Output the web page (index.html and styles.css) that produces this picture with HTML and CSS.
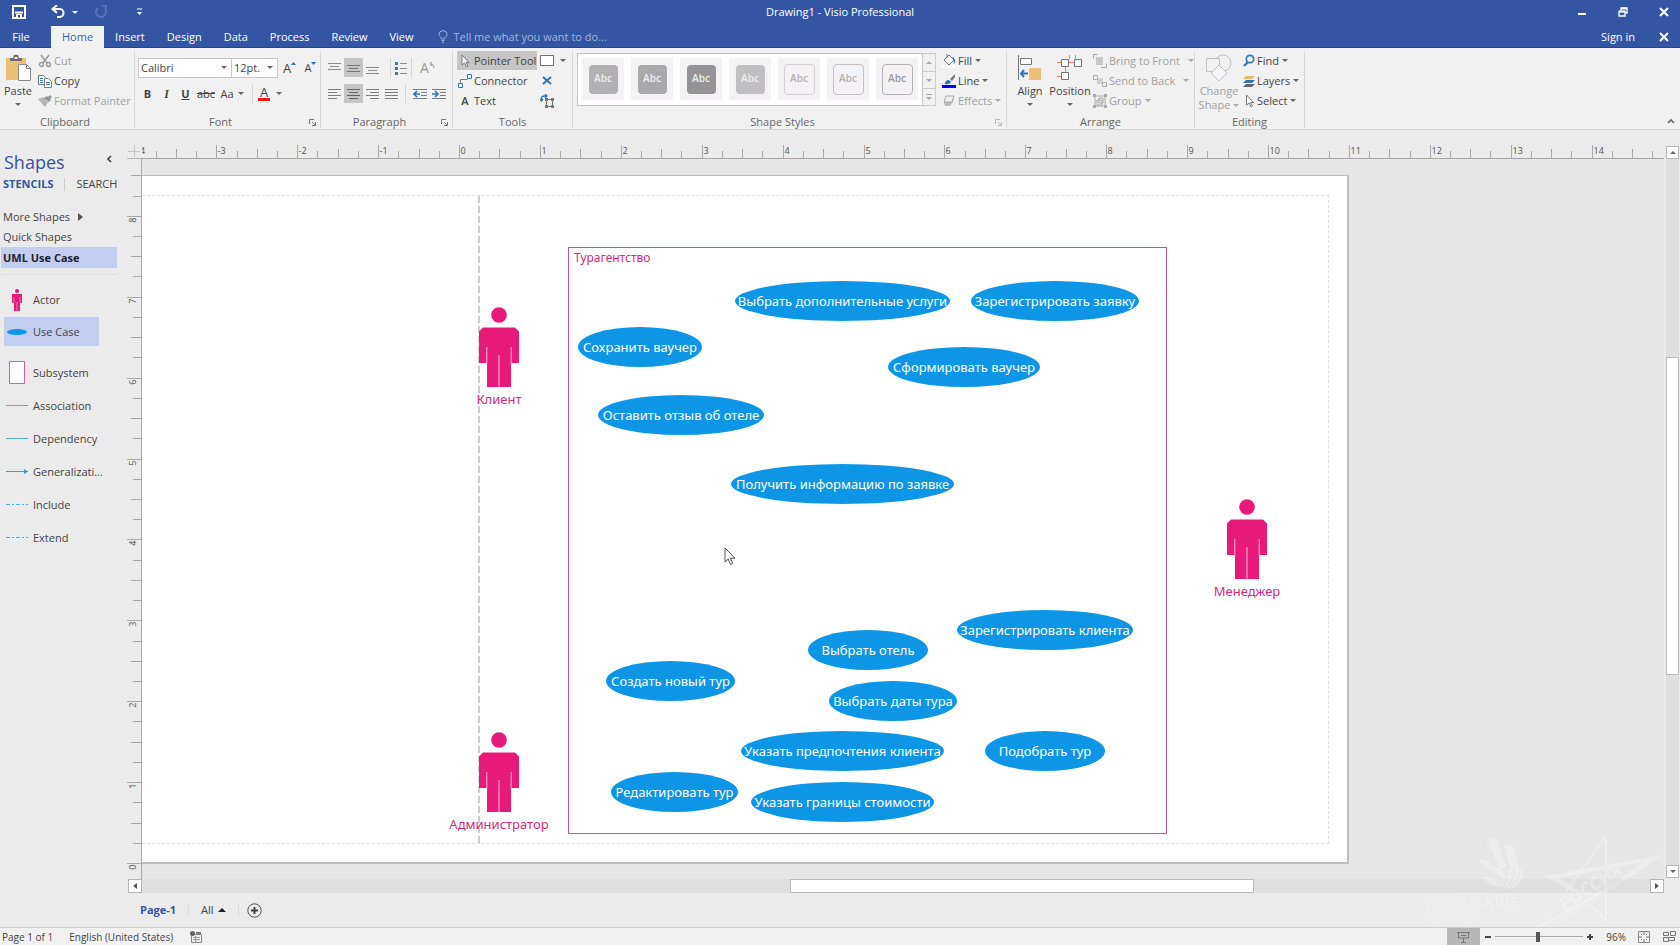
FILE: index.html
```html
<!DOCTYPE html>
<html lang="en">
<head>
<meta charset="utf-8">
<title>Drawing1 - Visio Professional</title>
<link rel="stylesheet" href="styles.css">
</head>
<body>
<div class="app">
  <header class="titlebar">
    <div class="quick">
      <button class="qbtn" aria-label="Save"><svg width="14" height="14" viewBox="0 0 14 14"><path d="M1 1h12v12H1z M1 1" fill="none" stroke="#fff" stroke-width="2"/><path d="M3 7.500h8" stroke="#fff" stroke-width="2"/><path d="M4 13v-4h6v4" fill="#fff"/><path d="M6 10h2v2.500H6z" fill="#3455a4"/></svg></button>
      <button class="qbtn undo" aria-label="Undo"><svg width="14" height="14" viewBox="0 0 14 14"><path d="M2 4h6.500a3.800 3.800 0 0 1 0 8H6" fill="none" stroke="#fff" stroke-width="2"/><path d="M6 0L1.500 4L6 8" fill="none" stroke="#fff" stroke-width="2"/></svg><i class="caret light"></i></button>
      <button class="qbtn redo" aria-label="Repeat"><svg width="14" height="14" viewBox="0 0 14 14"><path d="M4 3A5 5 0 1 0 11 4" fill="none" stroke="#5874ba" stroke-width="2"/><path d="M8 1h4v4" fill="none" stroke="#5874ba" stroke-width="1.500"/></svg></button>
      <button class="qbtn" aria-label="Customize Quick Access Toolbar"><svg width="7" height="8" viewBox="0 0 7 8"><path d="M1 1h5" stroke="#fff"/><path d="M1 4h5L3.500 7z" fill="#fff"/></svg></button>
    </div>
    <div class="doc-title">Drawing1 - Visio Professional</div>
    <div class="window-buttons">
      <button aria-label="Minimize"><svg width="10" height="10" viewBox="0 0 10 10"><path d="M1 7h8" stroke="#fff" stroke-width="2"/></svg></button>
      <button aria-label="Restore"><svg width="10" height="10" viewBox="0 0 10 10"><path d="M3 3V1h6v5H7.500M1 4.500h6V9H1z" fill="none" stroke="#fff" stroke-width="1.300"/><path d="M3 1.500h6M1 4.500h6" stroke="#fff" stroke-width="2"/></svg></button>
      <button aria-label="Close"><svg width="10" height="10" viewBox="0 0 10 10"><path d="M1 1l8 8M9 1L1 9" stroke="#fff" stroke-width="2"/></svg></button>
    </div>
  </header>

  <nav class="tabs">
    <button class="tab file">File</button>
    <button class="tab active">Home</button>
    <button class="tab">Insert</button>
    <button class="tab">Design</button>
    <button class="tab">Data</button>
    <button class="tab">Process</button>
    <button class="tab">Review</button>
    <button class="tab">View</button>
    <label class="tell"><svg width="10" height="13" viewBox="0 0 10 13"><path d="M3.500 9C3.500 7 1 6.500 1 4.300a4 3.700 0 0 1 8 0C9 6.500 6.500 7 6.500 9zM3.500 10.500h3M4 12.300h2" fill="none" stroke="#a3b4dc"/></svg><input type="text" aria-label="Tell me what you want to do" placeholder="Tell me what you want to do..."></label>
    <a class="signin" href="#">Sign in</a>
    <button class="close-doc" aria-label="Close drawing"><svg width="10" height="10" viewBox="0 0 10 10"><path d="M1 1l8 8M9 1L1 9" stroke="#fff" stroke-width="2"/></svg></button>
  </nav>

  <section class="ribbon" aria-label="Home">
    <div class="group clipboard">
      <div class="content">
        <button class="big paste"><svg width="28" height="28" viewBox="0 0 28 28"><path d="M2 4h20v22H2z" fill="#ecc077"/><path d="M6 7V4h3l1-3h4l1 3h3v3z" fill="#6b6b6b"/><path d="M10.500 3h3v2h-3z" fill="#f1f1f1"/><path d="M14.500 10.500h8l4 4v12h-12z" fill="#fff" stroke="#858585"/><path d="M22.500 10.500v4h4" fill="none" stroke="#858585"/></svg><span>Paste</span><i class="caret"></i></button>
        <div class="rows">
          <button class="cmd off"><svg width="14" height="14" viewBox="0 0 14 14"><path d="M3 1l6 8M11 1L5 9" stroke="#999" stroke-width="1.500"/><circle cx="3.500" cy="10.500" r="2" fill="none" stroke="#999" stroke-width="1.300"/><circle cx="10.500" cy="10.500" r="2" fill="none" stroke="#999" stroke-width="1.300"/></svg>Cut</button>
          <button class="cmd"><svg width="14" height="14" viewBox="0 0 14 14"><path d="M.5 1.500h5l2 2v7h-7z" fill="#fff" stroke="#7d7d7d"/><path d="M6.500 4.500h4l3 3v6h-7z" fill="#fff" stroke="#7d7d7d"/><path d="M2 4.500h3M2 6.500h3M2 8.500h3M8 8.500h4M8 10.500h4" stroke="#3c7ab5"/></svg>Copy</button>
          <button class="cmd off"><svg width="14" height="14" viewBox="0 0 14 14"><path d="M0 5l6-2 4 5-3 5z" fill="#b5b5b5"/><path d="M6 4l5 4 2-2-4-4zM10 3l2-2 2 2-2 2z" fill="#929292"/></svg>Format Painter</button>
        </div>
      </div>
      <div class="label">Clipboard</div>
    </div>

    <div class="group font">
      <div class="content stack">
        <div class="line">
          <span class="pick family"><select aria-label="Font"><option>Calibri</option></select><i class="caret"></i></span><span class="pick size"><select aria-label="Font size"><option>12pt.</option></select><i class="caret"></i></span>
          <button class="tool grow" aria-label="Increase font size"><span>A</span><svg width="5" height="14" viewBox="0 0 5 14"><path d="M0 4L2.500 1L5 4z" fill="#2f75b5"/></svg></button>
          <button class="tool grow small" aria-label="Decrease font size"><span>A</span><svg width="5" height="14" viewBox="0 0 5 14"><path d="M0 1h5L2.500 4z" fill="#2f75b5"/></svg></button>
        </div>
        <div class="line">
          <button class="tool b">B</button><button class="tool it">I</button><button class="tool u">U</button><button class="tool s">abc</button><button class="tool case">Aa<i class="caret"></i></button><i class="sep"></i><button class="tool color" aria-label="Font color"><span>A</span><i class="caret"></i></button>
        </div>
      </div>
      <div class="label has-launch">Font<svg class="launch" width="7" height="7" viewBox="0 0 7 7"><path d="M.5 5V.5H5M3 3l3 3M6.500 3v3.500H3" fill="none" stroke="#777"/></svg></div>
    </div>

    <div class="group paragraph">
      <div class="content stack">
        <div class="line">
          <button class="tool" aria-label="Top"><svg width="13" height="14"><path d="M0 2.500h13M2 5.500h9M0 8.500h13" stroke="#8a8a8a"/></svg></button><button class="tool on" aria-label="Middle"><svg width="13" height="14"><path d="M0 4.500h13M2 7.500h9M0 10.500h13" stroke="#777"/></svg></button><button class="tool" aria-label="Bottom"><svg width="13" height="14"><path d="M0 6.500h13M2 9.500h9M0 12.500h13" stroke="#8a8a8a"/></svg></button><i class="sep wide"></i><button class="tool bullets" aria-label="Bullets"><svg width="12" height="14"><path d="M5 2.500h7M5 7.500h7M5 12.500h7" stroke="#8a8a8a"/><path d="M0 1h3v3H0zM0 6h3v3H0zM0 11h3v3H0z" fill="#3c7ab5"/></svg></button><i class="sep"></i><button class="tool rotate" aria-label="Rotate text"><span>A</span><svg width="6" height="12" viewBox="0 0 6 12"><path d="M3 0L1 2l2 2M1 2h1q3 0 3 4" fill="none" stroke="#999"/></svg></button>
        </div>
        <div class="line">
          <button class="tool" aria-label="Align left"><svg width="13" height="12"><path d="M0 1.500h13M0 4.500h9M0 7.500h13M0 10.500h9" stroke="#7c7c7c"/></svg></button><button class="tool on" aria-label="Center"><svg width="13" height="12"><path d="M0 1.500h13M2 4.500h9M0 7.500h13M2 10.500h9" stroke="#666"/></svg></button><button class="tool" aria-label="Align right"><svg width="13" height="12"><path d="M0 1.500h13M4 4.500h9M0 7.500h13M4 10.500h9" stroke="#7c7c7c"/></svg></button><button class="tool" aria-label="Justify"><svg width="13" height="12"><path d="M0 1.500h13M0 4.500h13M0 7.500h13M0 10.500h13" stroke="#7c7c7c"/></svg></button><i class="sep"></i><button class="tool" aria-label="Decrease indent"><svg width="14" height="12"><path d="M0 1.500h14M8 4.500h6M8 7.500h6M0 10.500h14" stroke="#7c7c7c"/><path d="M1 6h6M4 3L1 6l3 3" fill="none" stroke="#2f75b5" stroke-width="1.600"/></svg></button><button class="tool" aria-label="Increase indent"><svg width="14" height="12"><path d="M0 1.500h14M8 4.500h6M8 7.500h6M0 10.500h14" stroke="#7c7c7c"/><path d="M0 6h6M3 3l3 3-3 3" fill="none" stroke="#2f75b5" stroke-width="1.600"/></svg></button>
        </div>
      </div>
      <div class="label has-launch">Paragraph<svg class="launch" width="7" height="7" viewBox="0 0 7 7"><path d="M.5 5V.5H5M3 3l3 3M6.500 3v3.500H3" fill="none" stroke="#777"/></svg></div>
    </div>

    <div class="group tools">
      <div class="content">
        <div class="rows first">
          <button class="cmd on"><svg width="14" height="14" viewBox="0 0 14 14"><path d="M4 1v10l2.500-2 2 4 1.500-1-2-3.500H11z" fill="#fff" stroke="#777"/></svg>Pointer Tool</button>
          <button class="cmd"><svg width="14" height="14" viewBox="0 0 14 14"><path d="M2.500 9V5.500h7" fill="none" stroke="#777"/><path d="M.5 9.500h4v4h-4zM9.500.5h4v4h-4z" fill="#fff" stroke="#2f75b5"/></svg>Connector</button>
          <button class="cmd"><b class="letter">A</b>Text</button>
        </div>
        <div class="rows">
          <button class="cmd" aria-label="Rectangle"><svg width="14" height="14"><path d="M.5 1.500h13v10H.5z" fill="#fff" stroke="#6f6f6f"/></svg><i class="caret"></i></button>
          <button class="cmd" aria-label="Connection point"><svg width="14" height="14"><path d="M3 3l8 7M11 3L3 10" stroke="#2f75b5" stroke-width="2"/></svg></button>
          <button class="cmd" aria-label="Text block"><svg width="14" height="14"><path d="M6.500 5.500h6v7h-6z" fill="none" stroke="#777"/><path d="M5 4h3v3H5zM11 4h3v3h-3zM5 11h3v3H5zM11 11h3v3h-3z" fill="#777"/><path d="M1.500 7V4q0-2 3-2h2M0 5l1.500 2L3 5M5 0l2 2-2 2" fill="none" stroke="#2f75b5" stroke-width="1.300"/></svg></button>
        </div>
      </div>
      <div class="label">Tools</div>
    </div>

    <div class="group styles">
      <div class="content">
        <div class="gallery">
          <button class="tile"><span class="sw s1">Abc</span></button>
          <button class="tile"><span class="sw s2">Abc</span></button>
          <button class="tile"><span class="sw s3">Abc</span></button>
          <button class="tile"><span class="sw s4">Abc</span></button>
          <button class="tile"><span class="sw o1">Abc</span></button>
          <button class="tile"><span class="sw o2">Abc</span></button>
          <button class="tile"><span class="sw o3">Abc</span></button>
        </div>
        <div class="spin"><button aria-label="Previous row"><i class="caret up off"></i></button><button aria-label="Next row"><i class="caret off"></i></button><button class="more" aria-label="More styles"><i class="caret off"></i></button></div>
        <div class="rows">
          <button class="cmd"><svg width="14" height="14" viewBox="0 0 14 14"><path d="M0 11h14v3H0z" fill="#fff"/><path d="M2 6l5-5 5 5-5 5z" fill="#fff" stroke="#777"/><path d="M5 4V0" stroke="#777"/><path d="M10 3q4 1 3 7q-2-2-1-4z" fill="#2f75b5"/></svg>Fill<i class="caret"></i></button>
          <button class="cmd"><svg width="14" height="14" viewBox="0 0 14 14"><path d="M0 11h14v3H0z" fill="#0000f0"/><path d="M3 10q0-4 4-4l2 2q-2 3-6 2z" fill="#2f75b5"/><path d="M8 5l5-5v3L10 7z" fill="#777"/></svg>Line<i class="caret"></i></button>
          <button class="cmd off"><svg width="14" height="14" viewBox="0 0 14 14"><path d="M2 9l2-7h8l-1 6-3 4H3z" fill="#b9b9b9"/><path d="M4 2h8l-2 6H2z" fill="#f1f1f1" stroke="#aaa"/></svg>Effects<i class="caret off"></i></button>
        </div>
      </div>
      <div class="label has-launch">Shape Styles<svg class="launch" width="7" height="7" viewBox="0 0 7 7"><path d="M.5 5V.5H5M3 3l3 3M6.500 3v3.500H3" fill="none" stroke="#bbb"/></svg></div>
    </div>

    <div class="group arrange">
      <div class="content">
        <button class="big align"><svg width="26" height="28" viewBox="0 0 26 28"><path d="M1.500 1v25" stroke="#777"/><path d="M3.500 4.500h11v6h-11z" fill="#fff" stroke="#777"/><path d="M12 14h12v12H12z" fill="#ecc077"/><path d="M4 19.500h7M7 16l-3 3.500L7 23" fill="none" stroke="#2f75b5" stroke-width="2"/></svg><span>Align</span><i class="caret"></i></button>
        <button class="big position"><svg width="28" height="28" viewBox="0 0 28 28"><path d="M1 8.500h25M9.500 12v7M1 22.500h5M13.500 1v4M19.500 1v4" stroke="#e08a63"/><path d="M5.500 5.500h7v7h-7zM18.500 5.500h7v7h-7zM5.500 18.500h7v7h-7z" fill="#fff" stroke="#777"/></svg><span>Position</span><i class="caret"></i></button>
        <div class="rows">
          <button class="cmd off"><svg width="14" height="14"><path d="M3 3h7v8H3z" fill="#c8c8c8"/><path d="M.5 4.500v-4h4M8 13.500h5.500v-4" fill="none" stroke="#aaa"/></svg><span class="wide">Bring to Front</span><i class="caret off"></i></button>
          <button class="cmd off"><svg width="14" height="14"><path d="M4 4h6v6H4z" fill="#d0d0d0"/><path d="M.5 1.500h4v4h-4zM9.500 8.500h4v4h-4z" fill="#f1f1f1" stroke="#aaa"/></svg><span class="wide">Send to Back</span><i class="caret off"></i></button>
          <button class="cmd off"><svg width="14" height="14"><path d="M2 2h10v10H2zM4 6h5v5H4zM6 4h4v5H6z" fill="none" stroke="#aaa"/><path d="M0 0h3v3H0zM11 0h3v3h-3zM0 11h3v3H0zM11 11h3v3h-3z" fill="#aaa"/></svg>Group<i class="caret off"></i></button>
        </div>
      </div>
      <div class="label">Arrange</div>
    </div>

    <div class="group editing">
      <div class="content">
        <button class="big off change"><svg width="28" height="28" viewBox="0 0 28 28"><circle cx="18" cy="9" r="8" fill="none" stroke="#c2c2c2"/><path d="M1.500 4.500h13v13h-13z" fill="#f4f1f4" stroke="#c2c2c2"/><path d="M14 11l8 8-8 8-8-8z" fill="#f7f4f7" stroke="#c2c2c2"/></svg><span>Change<br>Shape<i class="caret off inline"></i></span></button>
        <div class="rows">
          <button class="cmd"><svg width="12" height="14"><circle cx="7" cy="5" r="3.700" fill="none" stroke="#2f75b5" stroke-width="1.700"/><path d="M5 8l-4 4" stroke="#2f75b5" stroke-width="2.300"/></svg>Find<i class="caret"></i></button>
          <button class="cmd"><svg width="12" height="14"><path d="M3 2h9l-3 3H0z" fill="#ecb667"/><path d="M3 6h9l-3 3H0z" fill="#2f75b5"/><path d="M3 10h9l-3 3H0z" fill="#666"/></svg>Layers<i class="caret"></i></button>
          <button class="cmd"><svg width="12" height="14"><path d="M3.500 1v10l2.500-2 2 4 1.500-1-2-3.500h3z" fill="#fff" stroke="#777"/></svg>Select<i class="caret"></i></button>
        </div>
      </div>
      <div class="label">Editing</div>
    </div>
    <button class="collapse" aria-label="Collapse the ribbon"><svg width="8" height="6"><path d="M1 5l3-3 3 3" fill="none" stroke="#666" stroke-width="1.700"/></svg></button>
  </section>

  <main class="work">
    <aside class="shapes">
      <div class="head"><h2>Shapes</h2><button aria-label="Collapse shapes"><svg width="6" height="8"><path d="M5 1L2 4l3 3" fill="none" stroke="#444" stroke-width="1.700"/></svg></button></div>
      <div class="modes"><button class="on">STENCILS</button><i></i><button>SEARCH</button></div>
      <button class="stencil">More Shapes<svg width="5" height="8"><path d="M0 0l5 4-5 4z" fill="#555"/></svg></button>
      <button class="stencil">Quick Shapes</button>
      <button class="stencil on">UML Use Case</button>
      <hr>
      <ul class="masters">
        <li><svg width="24" height="22" viewBox="0 0 24 22"><circle cx="12" cy="2" r="2" fill="#e81a79"/><path d="M7 5h10v9h-2v8h-3v-7v7H9v-8H7z" fill="#e81a79"/><path d="M9 8v6M15 8v6M12 13v9" stroke="#f9b5d4" stroke-width=".6"/></svg><span>Actor</span></li>
        <li class="on"><svg width="24" height="10"><ellipse cx="12" cy="5" rx="10" ry="3" fill="#0d96e6"/></svg><span>Use Case</span></li>
        <li><svg width="24" height="24"><path d="M4.500.5h15v22h-15z" fill="#fff" stroke="#df5c9b"/></svg><span>Subsystem</span></li>
        <li><svg width="24" height="6"><path d="M1 2.500h22" stroke="#5aade0"/></svg><span>Association</span></li>
        <li><svg width="24" height="6"><path d="M1 2.500h22" stroke="#5aade0"/></svg><span>Dependency</span></li>
        <li><svg width="24" height="6"><path d="M1 2.500h22" stroke="#3c9bd8"/><path d="M19 0l4 2.500L19 5z" fill="#3c9bd8"/></svg><span>Generalizati...</span></li>
        <li><svg width="24" height="6"><path d="M5 2.500h15" stroke="#dff1fb" stroke-width="3"/><path d="M1 2.500h22" stroke="#5aade0" stroke-dasharray="4 2 2 2"/></svg><span>Include</span></li>
        <li><svg width="24" height="6"><path d="M5 2.500h15" stroke="#dff1fb" stroke-width="3"/><path d="M1 2.500h22" stroke="#5aade0" stroke-dasharray="4 2 2 2"/></svg><span>Extend</span></li>
      </ul>
    </aside>

    <div class="corner"><svg width="15" height="14"><path d="M1 7.500h12M7.500 1v12" stroke="#c4c4c4"/></svg></div>
    <svg class="ruler-x" id="rulerX" aria-hidden="true"></svg>
    <svg class="ruler-y" id="rulerY" aria-hidden="true"></svg>

    <div class="canvas">
      <div class="page" id="page">
        <div class="margins"></div>
        <div class="guide"></div>
        <div class="subsystem">Турагентство</div>
      </div>
      <svg class="pointer" width="13" height="19" viewBox="0 0 13 19"><path d="M1 1v14l3.200-3 2.300 5.500 2.200-1-2.300-5.300H11z" fill="#fff" stroke="#555"/></svg>
    </div>

    <div class="vscroll"><button aria-label="Scroll up"><i class="caret up"></i></button><div class="track"><div class="thumb"></div></div><button aria-label="Scroll down"><i class="caret"></i></button></div>
    <div class="hscroll"><button aria-label="Scroll left"><i class="caret left"></i></button><div class="track"><div class="thumb"></div></div><button aria-label="Scroll right"><i class="caret right"></i></button></div>
    <div class="pages"><button class="on">Page-1</button><i></i><button>All<b class="caret up dark"></b></button><i></i><button class="add" aria-label="Insert page"><svg width="15" height="15"><circle cx="7.500" cy="7.500" r="6.700" fill="none" stroke="#555"/><path d="M7.500 4v7M4 7.500h7" stroke="#444" stroke-width="2"/></svg></button></div>
  </main>

  <footer class="status">
    <span>Page 1 of 1</span>
    <span class="lang">English (United States)</span>
    <button aria-label="Macros"><svg width="12" height="12"><path d="M1.500 3.500h10v8h-10z" fill="none" stroke="#888"/><path d="M6 1h5v2H6z" fill="#777"/><circle cx="2.500" cy="2.500" r="2.500" fill="#666"/><path d="M3 6.500h7M3 8.500h7M5.500 5v6" stroke="#999"/></svg></button>
    <span class="space"></span>
    <button class="present" aria-label="Presentation mode"><svg width="13" height="12"><path d="M0 1.500h13M1.500 2v5h10V2M6.500 7v4M4 11.500h5M4 4.500h5" fill="none" stroke="#777"/></svg></button>
    <button class="zoom-step" aria-label="Zoom out"><svg width="6" height="8"><path d="M0 4h6" stroke="#444" stroke-width="2"/></svg></button>
    <input type="range" min="0" max="100" value="48" aria-label="Zoom">
    <button class="zoom-step" aria-label="Zoom in"><svg width="8" height="8"><path d="M1 4h6M4 1v6" stroke="#444" stroke-width="2"/></svg></button>
    <button class="percent">96%</button>
    <button aria-label="Fit page"><svg width="12" height="12"><path d="M.5.5h11v11H.5z" fill="none" stroke="#888"/><path d="M6 1v3M6 8v3M1 6h3M8 6h3M3 3l1 1M9 3L8 4M3 9l1-1M9 9L8 8" stroke="#777"/></svg></button>
    <button class="switch" aria-label="Switch windows"><svg width="13" height="12"><path d="M.5 1.500h5v3h-5zM7.500.5h5v4h-5zM.5 6.500h5v4h-5zM5.500 6.500h6v3h-6z" fill="none" stroke="#777"/></svg></button>
  </footer>

  <div class="watermark" aria-hidden="true">
    <div class="ws">
      <svg width="46" height="52" viewBox="0 0 46 52"><path d="M9 5q4-7 10-3l9 26-6 5-7-19zM26 9q7-5 11 3l5 20-8 2zM1 24q2-4 7-1l19 11-3 6zM5 40q5-3 20 3l-1 6q-12 0-19-9zM25 38q10-14 20-5 0 14-13 18l-8-3z" fill="#fff"/><path d="M28 50q8-8 8-20M25 49q4-8 5-18M32 51q8-7 10-19" stroke="#e0e0e0" fill="none"/></svg>
      <div>world<b>skills</b></div><div>Russia</div>
    </div>
    <svg class="star" width="130" height="94" viewBox="0 0 130 94"><path d="M68 2L28 58M68 2v84L46 66M2 92l62-34" fill="none" stroke="#fff" stroke-width="2"/><path d="M7 42L124 21L86 47l-3-4 22-15L22 44l16 11-3 3z" fill="#fff"/><text x="26" y="77" transform="rotate(-33 26 77)" class="ru">РОССИЯ</text><text x="20" y="90" transform="rotate(-33 20 90)" class="ru2">МОЛОДЫЕ ПРОФЕССИОНАЛЫ</text></svg>
  </div>
</div>
<script src="app.js"></script>
</body>
</html>
```
FILE: styles.css
```css
* { box-sizing: border-box; }
body { margin: 0; font: 11px/16px "Open Sans", "Noto Sans", sans-serif; color: #444; background: #ebebeb; }
button, select, input { font: inherit; color: inherit; border: 0; padding: 0; margin: 0; background: none; border-radius: 0; }
button { display: flex; align-items: center; justify-content: center; white-space: nowrap; }
svg { flex: none; display: block; }
.app { position: relative; min-height: 100vh; display: grid; grid-template-rows: 26px 22px 82px 1fr 18px; overflow: hidden; }

.caret { width: 0; height: 0; flex: none; border: 3px solid transparent; border-top-color: #666; border-bottom: 0; }
.caret.light { border-top-color: #fff; }
.caret.up { border: 3px solid transparent; border-bottom-color: #666; border-top: 0; }
.caret.left { border: 3px solid transparent; border-right: 4px solid #555; border-left: 0; }
.caret.right { border: 3px solid transparent; border-left: 4px solid #555; border-right: 0; }
.caret.off { border-top-color: #aaa; }
.caret.up.off { border-top-color: transparent; border-bottom-color: #aaa; }
.caret.dark { border-width: 4px; border-top: 0; border-bottom-color: #222; }

.titlebar { display: grid; grid-template-columns: 1fr auto 1fr; align-items: center; background: #3455a4; color: #fff; padding-bottom: 2px; }
.quick { display: flex; align-items: center; padding-left: 12px; }
.undo { margin-left: 25px; gap: 7px; }
.redo { margin-left: 16px; }
.redo + .qbtn { margin-left: 28px; }
.window-buttons { display: flex; justify-content: flex-end; gap: 31px; padding-right: 11px; }

.tabs { display: flex; background: #3455a4; color: #fff; border-bottom: 1px solid #1d479c; }
.tab { padding: 0 11px; }
.tab.file { width: 51px; padding: 0 9px 0 0; }
.tab.active { background: #f1f1f1; color: #3f5fae; margin-bottom: -1px; }
.tell { display: flex; align-items: center; gap: 5px; margin-left: 14px; flex: 1; color: #a3b4dc; }
.tell input { flex: 1; max-width: 240px; outline: 0; }
.tell input::placeholder { color: #a3b4dc; opacity: 1; }
.signin { color: #fff; text-decoration: none; align-self: center; }
.close-doc { margin: 0 11px 0 24px; }

.ribbon { position: relative; display: flex; background: #f1f1f1; border-bottom: 1px solid #d2d2d2; padding: 3px 0 1px; }
.group { display: flex; flex-direction: column; border-right: 1px solid #d8d8d8; flex: none; }
.content { display: flex; flex: 1; }
.content.stack { flex-direction: column; padding-top: 7px; gap: 7px; }
.label { position: relative; height: 13px; line-height: 13px; text-align: center; color: #666; }
.label.has-launch { padding-right: 14px; }
.launch { position: absolute; right: 4px; bottom: 2px; }
.line { display: flex; align-items: center; height: 19px; }
.rows { display: grid; grid-template-rows: repeat(3, 20px); justify-items: start; align-content: start; }
.cmd { height: 19px; gap: 2px; }
.cmd.off, .big.off { color: #a2a2a2; }
.cmd.on, .tool.on { background: #c5c5c5; }
.cmd .caret { margin-left: 1px; }
.big { flex-direction: column; justify-content: flex-start; line-height: 14px; padding-top: 3px; }
.big > span { margin-top: 2px; }
.big > .caret { margin-top: 5px; }
.caret.inline { display: inline-block; margin: 0 0 2px 3px; }
.tool { width: 19px; height: 19px; }
.sep { width: 1px; height: 19px; background: #d5d5d5; }

.clipboard { width: 135px; }
.clipboard .label { padding-right: 4px; }
.paste { width: 36px; }
.clipboard .rows { margin-left: 2px; }
.font { width: 186px; }
.font .line { padding-left: 3px; }
.pick { position: relative; height: 20px; background: #fff; border: 1px solid #c6c6c6; display: flex; align-items: center; }
.pick select { appearance: none; width: 100%; height: 18px; padding-left: 2px; outline: 0; }
.pick .caret { position: absolute; right: 4px; }
.family { width: 94px; }
.size { width: 46px; border-left: 0; }
.grow { align-items: center; font-size: 13px; margin-left: 2px; }
.grow.small { font-size: 11px; }
.b { font-weight: 700; }
.it { font-style: italic; font-family: "Liberation Serif", serif; font-weight: 700; font-size: 12px; }
.u { text-decoration: underline; font-weight: 700; }
.s { text-decoration: line-through; width: 22px; }
.case { width: 30px; gap: 4px; }
.case + .sep { margin: 0 5px; }
.color { width: 24px; gap: 6px; }
.color span { width: 14px; height: 15px; line-height: 12px; font-size: 13px; border-bottom: 3px solid #f11; }
.paragraph { width: 132px; }
.paragraph .line { padding-left: 4px; }
.paragraph .sep { margin: 0 4px; }
.paragraph .sep.wide { margin: 0 0 0 8px; }
.paragraph .bullets + .sep { margin: 0 6px 0 1px; }
.rotate { color: #999; font-size: 14px; }
.tools { width: 120px; }
.tools .first { margin: 0 3px 0 4px; width: 80px; }
.tools .cmd.on { width: 80px; }
.tools .first .cmd { justify-content: flex-start; padding-left: 1px; }
.tools .cmd .caret { margin-left: 4px; }
.letter { width: 14px; text-align: center; font-weight: 600; }
.styles { width: 434px; }
.gallery { display: flex; gap: 7px; height: 53px; margin: 2px 0 0 4px; padding: 4px; background: #fff; border: 1px solid #c3c3c3; }
.tile { width: 42px; height: 42px; background: #f5f2f5; }
.sw { width: 29px; height: 29px; line-height: 27px; border-radius: 4px; color: #eee; font-size: 10px; font-weight: 600; }
.s1 { background: #b1b0b3; } .s2 { background: #a9a8ab; } .s3 { background: #949395; } .s4 { background: #c0bfc2; }
.o1, .o2, .o3 { color: #b3b1b4; border: 1px solid #d3d0d3; width: 31px; height: 31px; }
.o2 { border-color: #c5c3c6; } .o3 { border-color: #b5b3b6; color: #999; }
.spin { display: grid; grid-template-rows: 1fr 1fr 1fr; width: 13px; height: 53px; margin: 2px 6px 0 0; border: 1px solid #cdcdcd; border-left: 0; }
.spin button + button { border-top: 1px solid #cdcdcd; }
.spin .more { flex-direction: column; gap: 2px; }
.spin .more::before { content: ""; width: 6px; height: 1px; background: #aaa; }
.arrange { width: 188px; }
.align { width: 42px; margin-left: 2px; }
.position { width: 38px; }
.arrange .rows { margin-left: 4px; }
.arrange .wide { padding-right: 5px; }
.editing { width: 110px; }
.change { width: 48px; }
.collapse { margin: auto 5px 4px auto; }

.work { display: grid; grid-template: 29px 1fr 14px 34px / 127px 15px minmax(0, 1fr) 16px; min-height: 0; }
.shapes { grid-row: 1 / -1; }
.head { display: flex; justify-content: space-between; align-items: flex-start; padding: 20px 15px 0 4px; height: 44px; }
.head h2 { margin: 0; font-size: 18px; line-height: 24px; font-weight: 400; color: #3455a4; }
.head button { height: 18px; }
.modes { display: flex; align-items: center; height: 20px; padding-left: 3px; }
.modes .on { color: #3455a4; font-weight: 700; }
.modes i { width: 1px; height: 13px; background: #ccc; margin: 0 11px; }
.stencil { width: 116px; height: 20px; margin-left: 1px; padding-left: 2px; justify-content: flex-start; gap: 8px; }
.modes + .stencil { margin-top: 13px; }
.stencil.on { height: 21px; background: #c2cef0; font-weight: 700; color: #223; }
.shapes hr { border: 0; border-top: 1px solid #dedede; margin: 6px 10px 8px 1px; }
.masters { list-style: none; margin: 0; padding: 0; }
.masters li { display: flex; align-items: center; gap: 4px; height: 33px; margin-left: 5px; }
.masters .on { background: #c2cef0; height: 29px; width: 95px; margin: 1px 0 10px 4px; padding-left: 1px; }
.corner { padding-top: 14px; border-bottom: 1px solid #b8b8b8; }
.ruler-x, .ruler-y { width: 100%; height: 100%; font-size: 9px; }
.ruler-x text, .ruler-y text { fill: #555; }
.ruler-x line, .ruler-y line { stroke: #a8a8a8; }

.canvas { position: relative; overflow: hidden; background: #e6e6e6; }
.page { position: relative; width: 1207px; height: 689px; margin-top: 16px; background: #fff; border: solid #bdbdbd; border-width: 1px 2px 2px 0; font-family: "Noto Sans", "Open Sans", sans-serif; }
.margins { position: absolute; left: 0; right: 18px; top: 19px; bottom: 18px; border: 1px dashed #e0e0e0; border-left: 0; }
.guide { position: absolute; left: 336px; top: 20px; bottom: 19px; width: 2px; background: repeating-linear-gradient(#ccc 0 7px, transparent 7px 10px); }
.subsystem { position: absolute; left: 426px; top: 71px; width: 599px; height: 587px; border: 1px solid #c9508c; padding: 2px 5px; color: #d12b7b; font-size: 12px; }
.usecase { position: absolute; height: 40px; padding-bottom: 1px; border-radius: 50%; background: #0d96e6; color: #fff; font-size: 13px; display: flex; align-items: center; justify-content: center; white-space: nowrap; }
.actor { position: absolute; width: 120px; display: flex; flex-direction: column; align-items: center; color: #d12b7b; font-size: 13px; line-height: 18px; gap: 3px; }
.pointer { position: absolute; left: 582px; top: 388px; }

.vscroll { grid-column: 4; grid-row: 1 / 3; display: flex; flex-direction: column; padding: 16px 1px 1px 2px; }
.vscroll button { height: 13px; background: #fff; border: 1px solid #b5b5b5; }
.vscroll .track { flex: 1; background: #dfdfdf; display: grid; grid-template-rows: 198fr 318fr 190fr; }
.thumb { background: #fff; border: 1px solid #bababa; grid-row: 2; }
.hscroll { grid-column: 2 / 4; grid-row: 3; display: flex; padding-left: 1px; }
.hscroll button { width: 14px; background: #fff; border: 1px solid #b5b5b5; }
.hscroll .track { flex: 1; background: #dfdfdf; display: grid; grid-template-columns: 648fr 464fr 396fr; }
.hscroll .thumb { grid-column: 2; grid-row: 1; }
.pages { grid-column: 2 / -1; grid-row: 4; display: flex; align-items: center; padding-left: 13px; }
.pages i { width: 1px; height: 14px; background: #dcdcdc; margin-left: 12px; }
.pages .on { color: #3455a4; font-weight: 700; }
.pages i + button { margin-left: 12px; gap: 4px; }
.pages i + .add { margin-left: 8px; }

.status { display: flex; align-items: center; background: #f1f1f1; border-top: 1px solid #cfcfcf; padding: 0 4px 0 2px; font-size: 10px; }
.lang { margin: 0 17px 0 16px; }
.space { flex: 1; }
.present { width: 33px; height: 17px; background: #b7b7b7; margin-right: 4px; }
.zoom-step { width: 8px; }
.status input { appearance: none; width: 88px; height: 12px; margin: 0 3px; background: linear-gradient(#aaa, #aaa) center / 100% 1px no-repeat; }
.status input::-webkit-slider-thumb { appearance: none; width: 4px; height: 10px; background: #555; }
.percent { margin: 0 12px; }
.switch { margin-left: 13px; }

.watermark { position: absolute; right: 12px; bottom: 17px; display: flex; align-items: flex-end; opacity: .3; color: #fff; pointer-events: none; }
.ws { font-size: 20px; line-height: 18px; font-weight: 300; margin-right: 14px; }
.ws svg { margin: 0 0 2px 54px; }
.ru { font-size: 18px; font-weight: 700; font-style: italic; fill: #fff; }
.ru2 { font-size: 7px; font-weight: 700; fill: #fff; }
```
FILE: app.js
```js
const NS = "http://www.w3.org/2000/svg";
const INCH = 80.9;

function node(parent, tag, attrs, text) {
  const el = document.createElementNS(NS, tag);
  for (const key in attrs) el.setAttribute(key, attrs[key]);
  if (text !== undefined) el.textContent = text;
  parent.appendChild(el);
}

// Horizontal ruler: 0 lies 317px right of the canvas edge.
const rx = document.getElementById("rulerX");
for (let q = -15; q <= 63; q++) {
  const x = Math.round(317 + q * INCH / 4) + 0.5;
  if (x > rx.clientWidth) break;
  const top = q % 4 === 0 ? 15 : q % 2 === 0 ? 19 : 21;
  node(rx, "line", { x1: x, x2: x, y1: top, y2: 28 });
  if (q % 4 === 0) node(rx, "text", { x: x + 1, y: 24 }, q / 4);
}
node(rx, "text", { x: -2, y: 24 }, "4");
node(rx, "line", { x1: 0, x2: "100%", y1: 28.5, y2: 28.5 });

// Vertical ruler: 0 lies at the page's bottom edge.
const ry = document.getElementById("rulerY");
for (let q = 0; q <= 34; q++) {
  const y = Math.round(704 - q * INCH / 4) + 0.5;
  const left = q % 4 === 0 ? 0 : q % 2 === 0 ? 4 : 6;
  node(ry, "line", { x1: left, x2: 14, y1: y, y2: y });
  if (q % 4 === 0) node(ry, "text", { x: 0, y: 0, "text-anchor": "end", transform: `translate(9 ${y + 1}) rotate(-90)` }, q / 4);
}
node(ry, "line", { x1: 14.5, x2: 14.5, y1: 0, y2: "100%" });

// Shapes: page coordinates in pixels.
const useCases = [
  ["Выбрать дополнительные услуги", 593, 215, 105],
  ["Зарегистрировать заявку", 829, 168, 105],
  ["Сохранить ваучер", 436, 124, 151],
  ["Сформировать ваучер", 746, 152, 171],
  ["Оставить отзыв об отеле", 456, 166, 219],
  ["Получить информацию по заявке", 589, 223, 288],
  ["Зарегистрировать клиента", 815, 176, 434],
  ["Выбрать отель", 666, 120, 454],
  ["Создать новый тур", 464, 129, 485],
  ["Выбрать даты тура", 687, 128, 505],
  ["Указать предпочтения клиента", 599, 203, 555],
  ["Подобрать тур", 843, 120, 555],
  ["Редактировать тур", 469, 127, 596],
  ["Указать границы стоимости", 609, 183, 606]
];
const page = document.getElementById("page");
for (const [name, x, width, y] of useCases) {
  const el = document.createElement("div");
  el.className = "usecase";
  el.style.cssText = `left:${x}px;top:${y}px;width:${width}px`;
  el.textContent = name;
  page.appendChild(el);
}

const figure = '<svg width="40" height="80" viewBox="0 0 40 80"><circle cx="20" cy="8" r="7.800"/><path d="M4 20.500h32l4 4V56h-8v24H8V56H0V24.500z"/><path d="M7.800 40v17M32.200 40v17M20 48v32" stroke="#fbb9d6"/></svg>';
for (const [name, x, y] of [["Клиент", 357, 131], ["Менеджер", 1105, 323], ["Администратор", 357, 556]]) {
  const el = document.createElement("div");
  el.className = "actor";
  el.style.cssText = `left:${x - 60}px;top:${y}px`;
  el.innerHTML = figure + `<span>${name}</span>`;
  el.firstChild.setAttribute("fill", "#e81a79");
  page.appendChild(el);
}
```
